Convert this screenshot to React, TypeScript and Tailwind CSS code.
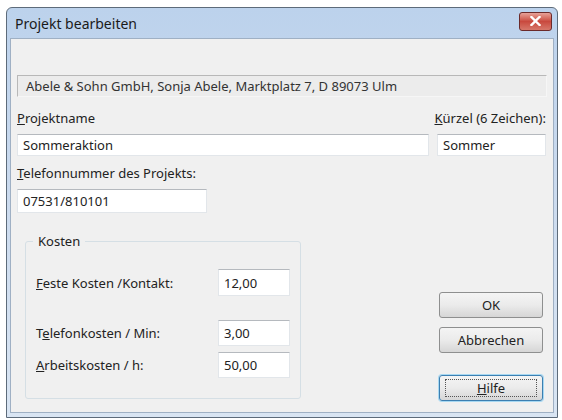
import React from "react";

const font = { fontFamily: '"Noto Sans", "Open Sans", sans-serif' };

function Field({ value, className = "" }: { value: string; className?: string }) {
  return (
    <div
      className={`h-[22px] bg-white border border-[#e2e6ea] border-t-[#b5b9be] flex items-center px-[5px] text-[13px] leading-[18px] text-[#222] ${className}`}
    >
      {value}
    </div>
  );
}

function Btn({ children, focus = false }: { children: React.ReactNode; focus?: boolean }) {
  return (
    <div
      className={`w-[104px] h-[26px] rounded-[3px] border ${
        focus ? "border-[#3c7fb1] shadow-[0_0_0_1px_#a7d8f2]" : "border-[#8e8f8f]"
      } bg-gradient-to-b from-[#f4f4f4] via-[#ebebeb] to-[#d6d6d6] flex items-center justify-center text-[13px] leading-[18px] text-[#222]`}
    >
      {focus ? (
        <span className="border border-dotted border-[#555] w-[92px] h-[18px] flex items-center justify-center">
          {children}
        </span>
      ) : (
        children
      )}
    </div>
  );
}

export default function App() {
  return (
    <div className="w-[562px] h-[420px] bg-white pl-[6px] pt-[7px]" style={font}>
      <div className="w-[552px] h-[411px] border border-[#5d6b7a] rounded-t-[6px] bg-gradient-to-b from-[#bcd2ec] via-[#cddcef] to-[#d9e5f3] flex flex-col px-[3px] pb-[4px]">
        {/* Title bar */}
        <div className="h-[30px] flex items-center justify-between pl-[5px] pr-[2px]">
          <span className="text-[14px] text-[#1a1a1a]">Projekt bearbeiten</span>
          <div className="w-[33px] h-[19px] -mt-[4px] rounded-[3px] border border-[#6b2a2a] bg-gradient-to-b from-[#e6a198] via-[#c9493e] to-[#d6776a] flex items-center justify-center">
            <svg width="11" height="10" viewBox="0 0 11 10">
              <path d="M1.5 1 L9.5 9 M9.5 1 L1.5 9" stroke="#fff" strokeWidth="2.4" strokeLinecap="square" />
            </svg>
          </div>
        </div>
        {/* Client area */}
        <div className="flex-1 bg-[#f0f0f0] border border-[#9fb0c4] flex flex-col px-[6px] text-[13px] leading-[18px] text-[#222]">
          <div className="mt-[36px] h-[22px] bg-[#ececec] border border-[#f6f6f6] border-t-[#b8b8b8] border-l-[#b8b8b8] flex items-center pl-[8px] text-[#333]">
            Abele &amp; Sohn GmbH, Sonja Abele, Marktplatz 7, D 89073 Ulm
          </div>
          <div className="mt-[12px] flex justify-between">
            <span>
              <u>P</u>rojektname
            </span>
            <span className="mr-[1px]">
              <u>K</u>ürzel (6 Zeichen):
            </span>
          </div>
          <div className="mt-[7px] flex gap-[8px]">
            <Field value="Sommeraktion" className="w-[412px]" />
            <Field value="Sommer" className="w-[109px]" />
          </div>
          <div className="mt-[8px]">
            <u>T</u>elefonnummer des Projekts:
          </div>
          <div className="mt-[7px]">
            <Field value="07531/810101" className="w-[190px] h-[24px]" />
          </div>
          <div className="flex justify-between mt-[28px]">
            {/* Group box */}
            <div className="relative ml-[8px] w-[276px] h-[158px] border border-[#d5dfe5] rounded-[3px] flex flex-col pl-[10px] pr-[10px]">
              <span className="absolute -top-[10px] left-[7px] px-[5px] bg-[#f0f0f0]">Kosten</span>
              <div className="mt-[27px] flex items-center justify-between">
                <span>
                  <u>F</u>este Kosten /Kontakt:
                </span>
                <Field value="12,00" className="w-[72px] h-[27px]" />
              </div>
              <div className="mt-[24px] flex items-center justify-between">
                <span>
                  T<u>e</u>lefonkosten / Min:
                </span>
                <Field value="3,00" className="w-[72px] h-[26px]" />
              </div>
              <div className="mt-[6px] flex items-center justify-between">
                <span>
                  <u>A</u>rbeitskosten / h:
                </span>
                <Field value="50,00" className="w-[72px] h-[26px]" />
              </div>
            </div>
            <div className="flex flex-col mr-[4px] pt-[51px]">
              <Btn>OK</Btn>
              <div className="mt-[9px]">
                <Btn>Abbrechen</Btn>
              </div>
              <div className="mt-[22px]">
                <Btn focus>
                  <span>
                    <u>H</u>ilfe
                  </span>
                </Btn>
              </div>
            </div>
          </div>
        </div>
      </div>
    </div>
  );
}
